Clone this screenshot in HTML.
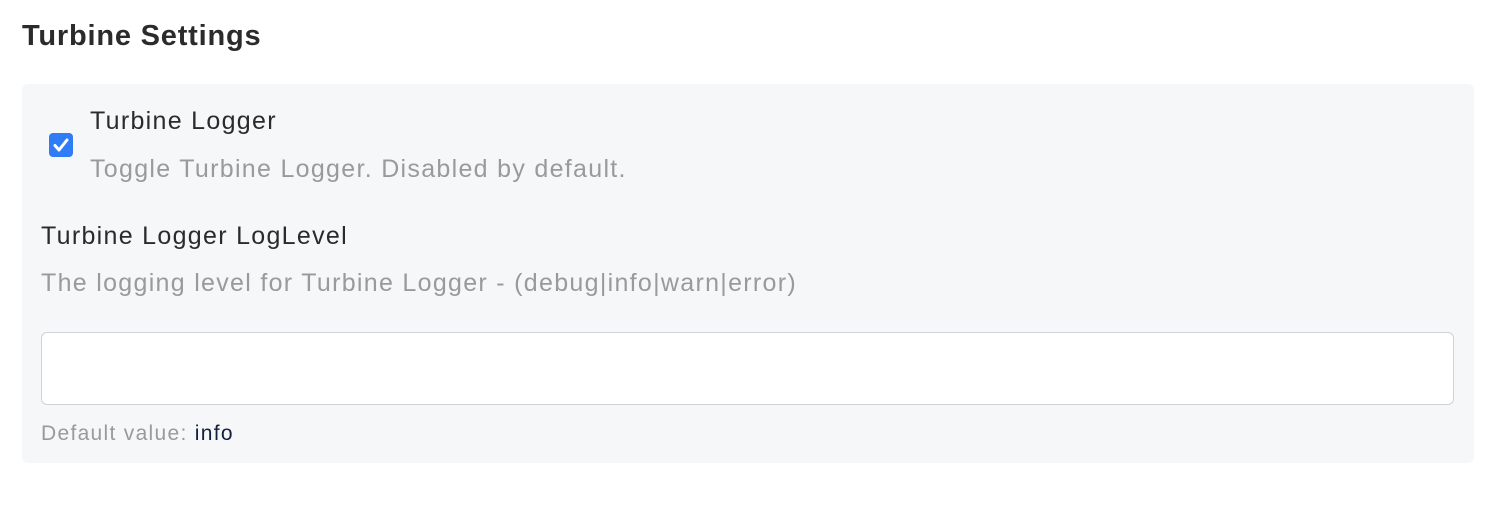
<!DOCTYPE html>
<html><head><style>
body{margin:0;background:#fff;font-family:"Liberation Sans",sans-serif;width:1506px;height:514px;position:relative;overflow:hidden}
.a{position:absolute;white-space:nowrap}
.t{font-size:25px;letter-spacing:1.3px}
</style></head><body>
<div class="a" style="left:22px;top:20px;font-size:29px;letter-spacing:0.8px;font-weight:bold;color:#2b2b2b">Turbine Settings</div>
<div class="a" style="left:22px;top:84px;width:1452px;height:379px;background:#f6f7f9;border-radius:6px"></div>
<div class="a" style="left:49px;top:133px;width:24px;height:24px;background:#2f7cf6;border-radius:4px">
<svg width="24" height="24" viewBox="0 0 24 24"><path d="M6 12.5l4 4.5 8-10" stroke="#fff" stroke-width="3" fill="none" stroke-linecap="round" stroke-linejoin="round"/></svg></div>
<div class="a t" style="left:90px;top:107px;color:#2b2b2b">Turbine Logger</div>
<div class="a t" style="left:90px;top:155px;color:#9a9a9a">Toggle Turbine Logger. Disabled by default.</div>
<div class="a t" style="left:41px;top:222px;color:#2b2b2b">Turbine Logger LogLevel</div>
<div class="a t" style="left:41px;top:269px;color:#9a9a9a">The logging level for Turbine Logger - (debug|info|warn|error)</div>
<div class="a" style="left:41px;top:332px;width:1411px;height:71px;background:#fff;border:1px solid #cfd2d6;border-radius:6px"></div>
<div class="a" style="left:41px;top:422px;font-size:21px;letter-spacing:1.3px;color:#9a9a9a">Default value: <span style="color:#14213d">info</span></div>
</body></html>
